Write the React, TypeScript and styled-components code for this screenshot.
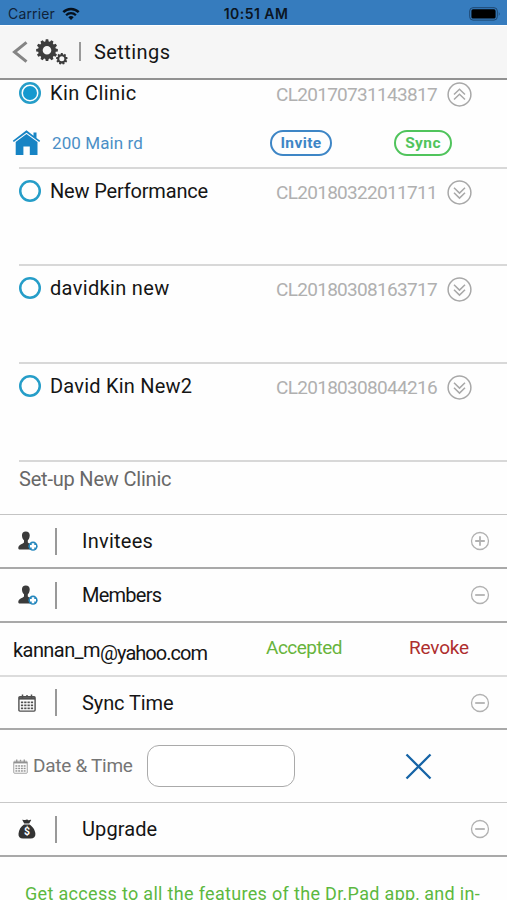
import React from "react";
import styled, { createGlobalStyle } from "styled-components";

const GlobalStyle = createGlobalStyle`
  * { box-sizing: border-box; }
  body {
    margin: 0;
    background: #fff;
    font-family: Roboto, "Liberation Sans", sans-serif;
    color: #151515;
  }
  svg { flex: none; }
`;

const Screen = styled.main`
  width: 507px;
  height: 900px;
  overflow: hidden;
  background: #fefefe;
`;

const Label = styled.span<{ $size?: number; $track?: number; $color?: string }>`
  font-size: ${(p) => p.$size ?? 20}px;
  letter-spacing: ${(p) => p.$track ?? 0}px;
  color: ${(p) => p.$color ?? "#151515"};
  line-height: 24px;
  white-space: nowrap;
`;

const StatusBar = styled.div`
  display: grid;
  grid-template-columns: 1fr auto 1fr;
  align-items: center;
  height: 25px;
  padding: 2px 6px 0 8px;
  background: #367cbe;
  font-family: Inter, "Liberation Sans", sans-serif;
`;

const Carrier = styled.div`
  display: flex;
  align-items: center;
  gap: 7px;
  font-size: 14px;
  letter-spacing: 0.15px;
  color: #10233a;
`;

const Clock = styled.div`
  padding-left: 3px;
  font-size: 14px;
  font-weight: 600;
  letter-spacing: 0.45px;
  color: #0b1522;
`;

const BatterySlot = styled.div`
  display: flex;
  justify-content: flex-end;
`;

const Header = styled.header`
  display: flex;
  align-items: center;
  height: 55px;
  padding: 0 0 1px 12px;
  background: #f6f6f6;
  border-top: 1px solid #fff;
  border-bottom: 2px solid #929292;
`;

const Divider = styled.i<{ $height: number }>`
  width: 2px;
  height: ${(p) => p.$height}px;
  background: #999;
`;

const HeaderGears = styled.div`
  display: flex;
  margin: 0 11px 0 8px;
`;

const HeaderTitle = styled.div`
  display: flex;
  margin-left: 13px;
`;

const ClinicItem = styled.section<{ $height: number; $open?: boolean }>`
  height: ${(p) => p.$height}px;
  padding-top: ${(p) => (p.$open ? 0 : 9)}px;
  margin-left: 19px;
  border-bottom: 2px solid #d8d8d8;
`;

const ClinicLine = styled.div`
  display: flex;
  align-items: center;
  height: 26px;
  padding-right: 35px;
`;

const Radio = styled.span`
  display: grid;
  place-items: center;
  width: 22px;
  height: 22px;
  margin-right: 9px;
  border-radius: 50%;
  box-shadow: inset 0 0 0 2.5px #259dc8;
`;

const RadioDot = styled.span`
  width: 14px;
  height: 14px;
  border-radius: 50%;
  background: #1599cf;
`;

const ClinicCode = styled.div`
  display: flex;
  align-items: center;
  justify-content: space-between;
  width: 196px;
  margin-left: auto;
  padding-top: 3px;
`;

const AddressLine = styled.div`
  display: flex;
  align-items: center;
  height: 30px;
  margin: 22px 0 0 -7px;
`;

const Address = styled.div`
  flex: none;
  width: 218px;
  margin-left: 11px;
`;

const Actions = styled.div`
  display: flex;
  gap: 62px;
`;

const Pill = styled.button<{ $color: string; $width: number }>`
  flex: none;
  width: ${(p) => p.$width}px;
  height: 26px;
  padding: 0;
  border: 2px solid ${(p) => p.$color};
  border-radius: 13px;
  background: transparent;
  color: ${(p) => p.$color};
  font: 700 15.5px/20px Roboto, "Liberation Sans", sans-serif;
  letter-spacing: 0.4px;
`;

const SetupRow = styled.div`
  display: flex;
  height: 53px;
  padding: 5px 0 0 19px;
  border-bottom: 1px solid #c4c4c4;
`;

const SectionRow = styled.section<{ $height: number }>`
  display: flex;
  align-items: center;
  height: ${(p) => p.$height}px;
  padding: 0 17px 0 18px;
  border-bottom: 2px solid #a9a9a9;
`;

const SectionIcon = styled.div`
  display: flex;
  width: 37px;
`;

const SectionTitle = styled.div`
  flex: 1;
  padding-left: 25px;
`;

const MemberRow = styled.div`
  display: grid;
  grid-template-columns: 253px 143px auto;
  height: 54px;
  padding: 13px 0 0 13px;
  border-bottom: 2px solid #dcdcdc;
`;

const Email = styled.div`
  display: flex;
`;

const EmailPart = styled.div<{ $drop: number }>`
  padding-top: ${(p) => p.$drop}px;
`;

const DateRow = styled.div`
  display: flex;
  align-items: center;
  height: 73px;
  padding-left: 13px;
  border-bottom: 1px solid #c8c8c8;
`;

const DateLabel = styled.div`
  width: 114px;
  margin-left: 5px;
`;

const DateInput = styled.input`
  width: 148px;
  height: 42px;
  margin-right: 110px;
  padding: 0 12px;
  border: 1.5px solid #aaa;
  border-radius: 12px;
  background: #fff;
`;

const Promo = styled.p`
  margin: 25px 0 0 25px;
`;

function Wifi() {
  return (
    <svg width="18" height="14" viewBox="0 0 18 14" fill="none" stroke="#06101c">
      <path d="M1.3 5.2a11 11 0 0 1 15.4 0" strokeWidth="2.5" />
      <path d="M4.1 8.2a7 7 0 0 1 9.8 0" strokeWidth="2.3" />
      <path d="M9 13 6.3 10.3a3.9 3.9 0 0 1 5.4 0Z" fill="#06101c" stroke="none" />
    </svg>
  );
}

function Battery() {
  return (
    <svg width="32" height="14" viewBox="0 0 32 14">
      <rect x="0.7" y="0.7" width="27.6" height="12.4" rx="3.3" fill="none" stroke="#1e4770" strokeWidth="1" />
      <rect x="2.4" y="2.3" width="24.2" height="9.2" rx="1.6" fill="#000" />
      <path d="M29.8 4.8q1.8 2.1 0 4.2Z" fill="#1e4770" />
    </svg>
  );
}

function gearPath(cx: number, cy: number, outer: number, inner: number, teeth: number) {
  const points: string[] = [];
  for (let i = 0; i < teeth; i++) {
    const step = (Math.PI * 2) / teeth;
    const profile: [number, number][] = [[-0.36, inner], [-0.22, outer], [0.22, outer], [0.36, inner]];
    for (const [offset, radius] of profile) {
      const a = (i + offset) * step - Math.PI / 2;
      points.push(`${(cx + Math.cos(a) * radius).toFixed(2)} ${(cy + Math.sin(a) * radius).toFixed(2)}`);
    }
  }
  return `M${points.join("L")}Z`;
}

function ring(cx: number, cy: number, r: number) {
  return `M${cx - r} ${cy}a${r} ${r} 0 1 0 ${r * 2} 0a${r} ${r} 0 1 0 ${-r * 2} 0Z`;
}

function Gears() {
  return (
    <svg width="32" height="26" viewBox="0 0 32 26" fill="#3d3d3d" fillRule="evenodd">
      <path d={gearPath(11, 11.2, 10.9, 8.9, 12) + ring(11, 11.2, 4.3)} />
      <path d={gearPath(25.8, 19.8, 5.8, 4.6, 9) + ring(25.8, 19.8, 2.5)} />
    </svg>
  );
}

function Chevrons({ up }: { up?: boolean }) {
  return (
    <svg width="25" height="25" viewBox="0 0 25 25" fill="none" stroke="#a8a8a8" strokeWidth="1.5">
      <circle cx="12.5" cy="12.5" r="11.4" />
      {up ? (
        <path d="m7 12.5 5.5-5.3 5.5 5.3M7 17.5l5.5-5.3 5.5 5.3" />
      ) : (
        <path d="m7 7.8 5.5 5.3L18 7.8M7 12.8l5.5 5.3 5.5-5.3" />
      )}
    </svg>
  );
}

function House() {
  return (
    <svg width="29" height="26" viewBox="0 0 29 26" fill="#1784c4">
      <path d="M14.5.3.8 10.7l1 1.3L14.5 2.7 27.2 12l1-1.3-3.7-2.8V2.4h-3v3.3Z" />
      <path d="M14.5 3.9 3.7 11.900V25h7.700v-8.600h6.400V25h7.700V11.900Z" />
    </svg>
  );
}

function Person() {
  return (
    <svg width="21" height="20" viewBox="0 0 21 20">
      <path
        d="M7.8.5c2.7 0 4.1 1.7 3.9 4.2-.2 2.1-.8 3.6-1.9 4.5v2.3c1.2 1.1 3.6 1.3 4.8 2.6v4.4H2.2C.4 18.5-.1 17.2.6 15.6c.8-2 4.2-2.4 5.4-4V9.2C4.9 8.3 4.1 6.8 4 4.7 3.8 2.2 5.1.5 7.8.5Z"
        fill="#3b3b3b"
      />
      <circle cx="15" cy="15.2" r="4.6" fill="#2587bd" />
      <path d="M15 12.2v6M12 15.2h6" stroke="#fff" strokeWidth="2.5" />
    </svg>
  );
}

function Calendar({ size, color, thin }: { size: number; color: string; thin?: boolean }) {
  const grid = [0, 1, 2, 3];
  return (
    <svg width={size} height={size} viewBox="0 0 18 18">
      <rect x="0.9" y="2.7" width="16.2" height="14.4" rx="1" fill="none" stroke={color} strokeWidth={thin ? 1 : 1.4} />
      <path d="M1 4.4h16" stroke={color} strokeWidth={thin ? 1.8 : 2.4} />
      <path d="M4.5.5v4M13.5.5v4M9 1v2" stroke={color} strokeWidth="1.5" />
      {[7.5, 10.5, 13.5].map((y) =>
        grid.map((i) => (
          <rect key={`${y}-${i}`} x={2.9 + i * 3.3} y={y} width="2.3" height="1.7" fill={color} />
        ))
      )}
    </svg>
  );
}

function MoneyBag() {
  return (
    <svg width="18" height="20" viewBox="0 0 18 20">
      <path
        d="M4.2.8c1.3-.4 2 .6 3 .2C8.300.4 9 .2 10 .9c1.200.7 2-.4 3.200 0l-2 3.600H6.200Z M6 5.500h5.500c3 1.800 5.600 5.400 5.900 9.200.2 3.100-1.600 4.700-4.700 4.700H5C1.900 19.400.2 17.800.5 14.700.8 10.900 3 7.300 6 5.500Z"
        fill="#333"
      />
      <text x="9" y="16.3" textAnchor="middle" fontSize="10.5" fontWeight="700" fill="#fff" fontFamily="Roboto, sans-serif">
        $
      </text>
    </svg>
  );
}

function Toggle({ plus }: { plus?: boolean }) {
  return (
    <svg width="20" height="20" viewBox="0 0 20 20" fill="none" stroke="#b1b1b1">
      <circle cx="10" cy="10" r="8.5" strokeWidth="1.3" />
      <path d={plus ? "M5.2 10h9.6M10 5.2v9.6" : "M5.2 10h9.6"} strokeWidth="1.8" />
    </svg>
  );
}

const clinics = [
  { name: "Kin Clinic", track: 0.42, height: 89, code: "CL20170731143817", open: true },
  { name: "New Performance", track: -0.17, height: 97, code: "CL20180322011711" },
  { name: "davidkin new", track: 0.33, height: 98, code: "CL20180308163717" },
  { name: "David Kin New2", track: 0.22, height: 98, code: "CL20180308044216" },
];

interface SectionProps {
  title: string;
  icon: React.ReactNode;
  height?: number;
  plus?: boolean;
  track?: number;
}

function Section({ title, icon, height = 54, plus, track }: SectionProps) {
  return (
    <SectionRow $height={height}>
      <SectionIcon>{icon}</SectionIcon>
      <Divider $height={27} />
      <SectionTitle>
        <Label $track={track}>{title}</Label>
      </SectionTitle>
      <Toggle plus={plus} />
    </SectionRow>
  );
}

export default function App() {
  return (
    <Screen>
      <GlobalStyle />
      <StatusBar>
        <Carrier>
          Carrier
          <Wifi />
        </Carrier>
        <Clock>10:51 AM</Clock>
        <BatterySlot>
          <Battery />
        </BatterySlot>
      </StatusBar>
      <Header>
        <svg width="16" height="22" viewBox="0 0 16 22" fill="none" stroke="#858585" strokeWidth="3">
          <path d="M14.5 1.3 2.5 11l12 9.7" />
        </svg>
        <HeaderGears>
          <Gears />
        </HeaderGears>
        <Divider $height={19} />
        <HeaderTitle>
          <Label $track={0.42}>Settings</Label>
        </HeaderTitle>
      </Header>

      {clinics.map((clinic) => (
        <ClinicItem key={clinic.code} $height={clinic.height} $open={clinic.open}>
          <ClinicLine>
            <Radio>{clinic.open && <RadioDot />}</Radio>
            <Label $track={clinic.track}>{clinic.name}</Label>
            <ClinicCode>
              <Label $track={-0.7} $size={19} $color="#b0b0b0">{clinic.code}</Label>
              <Chevrons up={clinic.open} />
            </ClinicCode>
          </ClinicLine>
          {clinic.open && (
            <AddressLine>
              <House />
              <Address>
                <Label $size={17} $track={0.1} $color="#4b8fc6">200 Main rd</Label>
              </Address>
              <Actions>
                <Pill $color="#3e86c6" $width={62}>Invite</Pill>
                <Pill $color="#50c45c" $width={58}>Sync</Pill>
              </Actions>
            </AddressLine>
          )}
        </ClinicItem>
      ))}

      <SetupRow>
        <Label $color="#686868" $track={-0.2}>Set-up New Clinic</Label>
      </SetupRow>
      <Section title="Invitees" icon={<Person />} track={0.25} plus />
      <Section title="Members" icon={<Person />} track={-0.75} />
      <MemberRow>
        <Email>
          <EmailPart $drop={2}><Label $track={-0.57}>kannan_m</Label></EmailPart>
          <EmailPart $drop={5}><Label $track={-0.97}>@yahoo.com</Label></EmailPart>
        </Email>
        <Label $size={19} $track={-0.5} $color="#68b43c">Accepted</Label>
        <Label $size={19} $track={-0.2} $color="#ae2e2e">Revoke</Label>
      </MemberRow>
      <Section title="Sync Time" icon={<Calendar size={18} color="#505050" />} height={53} track={-0.1} />
      <DateRow>
        <Calendar size={15} color="#929292" thin />
        <DateLabel>
          <Label $size={19} $track={-0.28} $color="#757575">Date &amp; Time</Label>
        </DateLabel>
        <DateInput aria-label="Date and time" />
        <svg width="27" height="27" viewBox="0 0 27 27" fill="none" stroke="#1664a6" strokeWidth="2.3">
          <path d="m1.500 1.500 24 24m0-24-24 24" />
        </svg>
      </DateRow>
      <Section title="Upgrade" icon={<MoneyBag />} track={0.1} />
      <Promo>
        <Label $size={18} $track={0.32} $color="#5cb83e">Get access to all the features of the Dr.Pad app, and in-</Label>
      </Promo>
    </Screen>
  );
}
